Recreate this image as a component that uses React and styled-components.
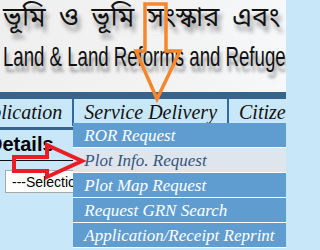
import React from 'react';
import styled, { createGlobalStyle } from 'styled-components';

const GlobalStyle = createGlobalStyle`
  html, body {
    margin: 0;
    padding: 0;
    background: #c8e7f9;
    overflow: hidden;
  }
`;

const menuItems = [
  'ROR Request',
  'Plot Info. Request',
  'Plot Map Request',
  'Request GRN Search',
  'Application/Receipt Reprint',
];

const App = () => {
  return (
    <Page>
      <GlobalStyle />
      <Header>
        <BanglaTitle>ভূমি ও ভূমি সংস্কার এবং</BanglaTitle>
        <EnglishTitle>Land &amp; Land Reforms and Refugee Relief</EnglishTitle>
      </Header>
      <TopBar />
      <Nav>
        <NavItem>Application</NavItem>
        <NavItem>
          Service Delivery
          <Dropdown>
            {menuItems.map((item, i) => (
              <MenuRow key={item} hovered={i === 1}>{item}</MenuRow>
            ))}
          </Dropdown>
        </NavItem>
        <NavItem>Citizen Corner</NavItem>
      </Nav>
      <Content>
        <Heading>Details</Heading>
        <Select defaultValue="">
          <option value="">---Selection---</option>
        </Select>
      </Content>

      {/* annotation arrows drawn over the screenshot */}
      <Marks width="286" height="250" viewBox="0 0 286 250">
        <polygon
          points="145,4 166,4 166,51 180,51 157,99 136,51 145,51"
          fill="none"
          stroke="#f7862c"
          strokeWidth="3.5"
          strokeLinejoin="miter"
        />
        <polygon
          points="14,157 47,157 47,145 82,161 47,177 47,171 14,171"
          fill="none"
          stroke="#ec1c24"
          strokeWidth="4"
          strokeLinejoin="miter"
        />
      </Marks>
    </Page>
  );
};

export default App;

const Page = styled.div`
  position: relative;
  width: 286px;
  height: 250px;
  overflow: hidden;
  background: #c8e7f9;
`;

const Header = styled.header`
  height: 92px;
  padding-left: 3px;
  box-sizing: border-box;
  background: linear-gradient(to right, #efefef 0%, #f3f3f3 60%, #f6f8fa 100%);
  overflow: hidden;
  white-space: nowrap;
`;

const BanglaTitle = styled.div`
  font-family: "Noto Sans Bengali", "Noto Serif Bengali", "Lohit Bengali", "FreeSerif", serif;
  font-size: 27px;
  line-height: 38px;
  color: #111;
  word-spacing: 6px;
  text-shadow: 3px 6px 4px rgba(0, 0, 0, 0.4);
`;

const EnglishTitle = styled.div`
  font-family: "Liberation Sans", Arial, sans-serif;
  font-size: 28px;
  line-height: 34px;
  margin-top: 2px;
  color: #111;
  transform: scaleX(0.665);
  transform-origin: left center;
  text-shadow: 3px 6px 4px rgba(0, 0, 0, 0.4);
`;

const TopBar = styled.div`
  height: 7px;
  background: #38648c;
`;

const Nav = styled.nav`
  display: flex;
  height: 28px;
  margin-left: -41px;
  background: #c8e7f9;
  white-space: nowrap;
`;

const NavItem = styled.div`
  position: relative;
  padding: 0 10px;
  border-right: 2px solid #2f6aa3;
  font-family: "Liberation Serif", "Times New Roman", serif;
  font-style: italic;
  font-size: 20px;
  line-height: 26px;
  color: #111;
  height: 27px;
`;

const Dropdown = styled.ul`
  position: absolute;
  top: 24px;
  left: -1px;
  width: 240px;
  margin: 0;
  padding: 0;
  list-style: none;
  z-index: 2;
`;

const MenuRow = styled.li`
  height: 24px;
  padding-left: 11px;
  border-bottom: 1px solid #ffffff;
  background: ${(p) => (p.hovered ? '#dfe5ec' : '#5f9dd0')};
  color: ${(p) => (p.hovered ? '#34557f' : '#ffffff')};
  font-family: "Liberation Serif", "Times New Roman", serif;
  font-style: italic;
  font-size: 17px;
  line-height: 25px;
`;

const Content = styled.section`
  border-top: 3px solid #38648c;
  padding: 0 0 0 5px;
`;

const Heading = styled.h3`
  margin: 0 0 9px -17px;
  padding: 3px 0 4px;
  border-bottom: 1px solid #111;
  font-family: "Liberation Sans", Arial, sans-serif;
  font-weight: bold;
  font-size: 20px;
  line-height: 23px;
  color: #000;
`;

const Select = styled.select`
  width: 150px;
  height: 23px;
  border: 1px solid #a9a9a9;
  background: #fff;
  font-family: "Liberation Sans", Arial, sans-serif;
  font-size: 14px;
  padding: 0 2px;
  color: #000;
`;

const Marks = styled.svg`
  position: absolute;
  left: 0;
  top: 0;
  pointer-events: none;
  z-index: 3;
`;
